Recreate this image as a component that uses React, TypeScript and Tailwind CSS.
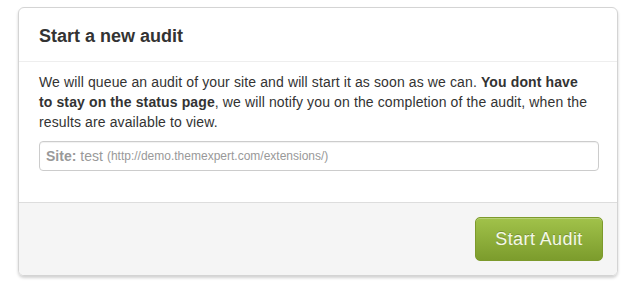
import React from 'react';

export default function App() {
  return (
    <div className="w-[631px] h-[288px] bg-white pt-[7px] pl-[18px] font-['Liberation_Sans',Arial,sans-serif] text-[#333]">
      <div className="w-[600px] h-[269px] rounded-[6px] border border-[#d4d4d4] shadow-[0_2px_3px_rgba(0,0,0,0.18)] flex flex-col overflow-hidden">
        <div className="h-[54px] border-b border-[#eeeeee] px-[20px] flex items-center">
          <h3 className="text-[18px] font-bold text-[#333] leading-none pt-[3px]">Start a new audit</h3>
        </div>
        <div className="px-[20px] pt-[10px] h-[141px] border-b border-[#dddddd]">
          <p className="w-[552px] text-[14px] leading-[20px] text-[#333] tracking-[0.12px]">
            We will queue an audit of your site and will start it as soon as we can. <b>You dont have to stay on the status page</b>, we will notify you on the completion of the audit, when the results are available to view.
          </p>
          <div className="mt-[9px] w-[560px] h-[30px] rounded-[4px] border border-[#cccccc] shadow-[inset_0_1px_1px_rgba(0,0,0,0.06)] flex items-center px-[6px] text-[#999]">
            <span className="text-[14px] font-bold">Site:</span>
            <span className="text-[14px] ml-[4px]">test</span>
            <span className="text-[12px] ml-[4px]">(http://demo.themexpert.com/extensions/)</span>
          </div>
        </div>
        <div className="flex-1 bg-[#f5f5f5] flex justify-end items-start pt-[14px] pr-[14px]">
          <button className="w-[128px] h-[44px] rounded-[5px] border border-[#7d9a2c] bg-gradient-to-b from-[#a1c24a] to-[#7c9c2c] text-[18px] tracking-[0.4px] text-[#f4f8e8] shadow-[inset_0_1px_0_rgba(255,255,255,0.25)] [text-shadow:0_-1px_0_rgba(0,0,0,0.2)]">
            Start Audit
          </button>
        </div>
      </div>
    </div>
  );
}
